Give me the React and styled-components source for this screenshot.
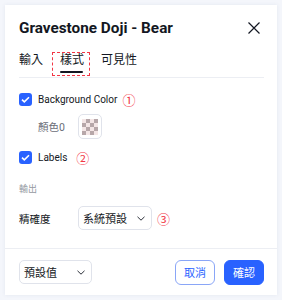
import React from 'react'
import styled, { createGlobalStyle } from 'styled-components'

const Global = createGlobalStyle`
  body {
    margin: 0;
    background: #f4f6fb;
    font-family: Roboto, "Noto Sans CJK TC", sans-serif;
    color: #131722;
  }
`

const Page = styled.div`
  width: 282px;
  height: 300px;
  padding: 5px;
  box-sizing: border-box;
`

const Dialog = styled.div`
  background: #fff;
  height: 290px;
  display: flex;
  flex-direction: column;
  box-shadow: 0 0 4px rgba(40, 60, 120, 0.08);
`

const Header = styled.div`
  display: flex;
  align-items: center;
  justify-content: space-between;
  padding: 12px 17px 0 14px;
  height: 22px;
`

const Title = styled.h1`
  margin: 0;
  font-size: 15.3px;
  font-weight: 700;
`

const Close = styled.button`
  border: 0;
  background: none;
  padding: 0;
  width: 12px;
  height: 12px;
  display: flex;
`

const Tabs = styled.div`
  margin: 9px 13px 0 14px;
  display: flex;
  gap: 17px;
  height: 26px;
  padding-bottom: 3px;
  border-bottom: 1px solid #eceef3;
`

const Tab = styled.div`
  position: relative;
  font-size: 12px;
  line-height: 20px;
  padding: 2px 0 4px;
  ${p => p.$active && `
    &::after {
      content: '';
      position: absolute;
      left: 0;
      right: 1px;
      bottom: 1px;
      height: 2.5px;
      border-radius: 2px;
      background: #131722;
    }
    &::before {
      content: '';
      position: absolute;
      left: -8px;
      right: -6px;
      top: 4px;
      bottom: -2px;
      border: 1px dashed #f23645;
    }
  `}
`

const Body = styled.div`
  flex: 1;
  padding: 11px 14px 0;
  display: flex;
  flex-direction: column;
`

const CheckRow = styled.div`
  display: flex;
  align-items: center;
  gap: 6px;
  height: 20px;
  margin-top: ${p => p.$top || 0}px;
  font-size: 10px;
`

const Box = styled.span`
  width: 13px;
  height: 13px;
  border-radius: 3px;
  background: #2962ff;
  display: flex;
  align-items: center;
  justify-content: center;
`

const Mark = styled.span`
  color: #f23645;
  font-family: "Noto Sans CJK TC", sans-serif;
  font-size: 13px;
  margin-left: ${p => p.$gap || 0}px;
  line-height: 1;
`

const FieldRow = styled.div`
  display: flex;
  align-items: center;
  margin-left: ${p => p.$indent || 0}px;
  margin-top: ${p => p.$top || 0}px;
  font-size: 10.5px;
`

const FieldLabel = styled.span`
  width: ${p => p.$w}px;
  color: ${p => p.$muted ? '#6a6d78' : '#131722'};
`

const Swatch = styled.div`
  width: 22px;
  height: 23px;
  border: 1px solid #e0e3eb;
  border-radius: 5px;
  display: flex;
  align-items: center;
  justify-content: center;
`

const Checker = styled.div`
  width: 16px;
  height: 16px;
  background-color: #f4e6e6;
  background-image:
    linear-gradient(45deg, #b7a7a9 25%, transparent 25%, transparent 75%, #b7a7a9 75%),
    linear-gradient(45deg, #b7a7a9 25%, transparent 25%, transparent 75%, #b7a7a9 75%);
  background-size: 8px 8px;
  background-position: 0 0, 4px 4px;
`

const Section = styled.div`
  margin-top: 15px;
  font-size: 9px;
  line-height: 14px;
  color: #9598a1;
`

const Select = styled.div`
  width: ${p => p.$w}px;
  height: 22px;
  border: 1px solid #e0e3eb;
  border-radius: 5px;
  display: flex;
  align-items: center;
  justify-content: space-between;
  padding: 0 6px 0 4px;
  font-size: 11px;
  color: #131722;
`

const Footer = styled.div`
  border-top: 1px solid #eceef3;
  height: 46px;
  display: flex;
  align-items: center;
  padding: 0 13px 0 14px;
  gap: 9px;
`

const Button = styled.button`
  width: 40px;
  height: 25px;
  box-sizing: border-box;
  border-radius: 6px;
  font-family: inherit;
  font-size: 11px;
  padding: 0;
  border: 1px solid ${p => p.$primary ? '#2962ff' : '#8aa6f7'};
  background: ${p => p.$primary ? '#2962ff' : '#fff'};
  color: ${p => p.$primary ? '#fff' : '#2962ff'};
  ${p => !p.$primary && 'margin-left: auto;'}
`

const Chevron = () => (
  <svg width="8" height="5" viewBox="0 0 8 5" fill="none">
    <path d="M0.5 0.8l3.5 3.4 3.5-3.4" stroke="#131722" strokeWidth="0.9" />
  </svg>
)

const Check = () => (
  <svg width="9" height="7" viewBox="0 0 9 7" fill="none">
    <path d="M1 3.6l2.3 2.2L8 1.2" stroke="#fff" strokeWidth="1.6" />
  </svg>
)

const App = () => (
  <Page>
    <Global />
    <Dialog>
      <Header>
        <Title>Gravestone Doji - Bear</Title>
        <Close>
          <svg width="12" height="12" viewBox="0 0 12 12">
            <path d="M0.5 0.5l11 11M11.5 0.5l-11 11" stroke="#131722" strokeWidth="1.2" />
          </svg>
        </Close>
      </Header>
      <Tabs>
        <Tab>輸入</Tab>
        <Tab $active>樣式</Tab>
        <Tab>可見性</Tab>
      </Tabs>
      <Body>
        <CheckRow>
          <Box><Check /></Box>
          Background Color
          <Mark $gap={-1}>①</Mark>
        </CheckRow>
        <FieldRow $indent={19} $top={5}>
          <FieldLabel $w={40} $muted>顏色0</FieldLabel>
          <Swatch><Checker /></Swatch>
        </FieldRow>
        <CheckRow $top={8}>
          <Box><Check /></Box>
          Labels
          <Mark $gap={3}>②</Mark>
        </CheckRow>
        <Section>輸出</Section>
        <FieldRow $top={10}>
          <FieldLabel $w={59}>精確度</FieldLabel>
          <Select $w={62}>系統預設<Chevron /></Select>
          <Mark $gap={5}>③</Mark>
        </FieldRow>
      </Body>
      <Footer>
        <Select $w={61}>預設值<Chevron /></Select>
        <Button>取消</Button>
        <Button $primary>確認</Button>
      </Footer>
    </Dialog>
  </Page>
)

export default App
